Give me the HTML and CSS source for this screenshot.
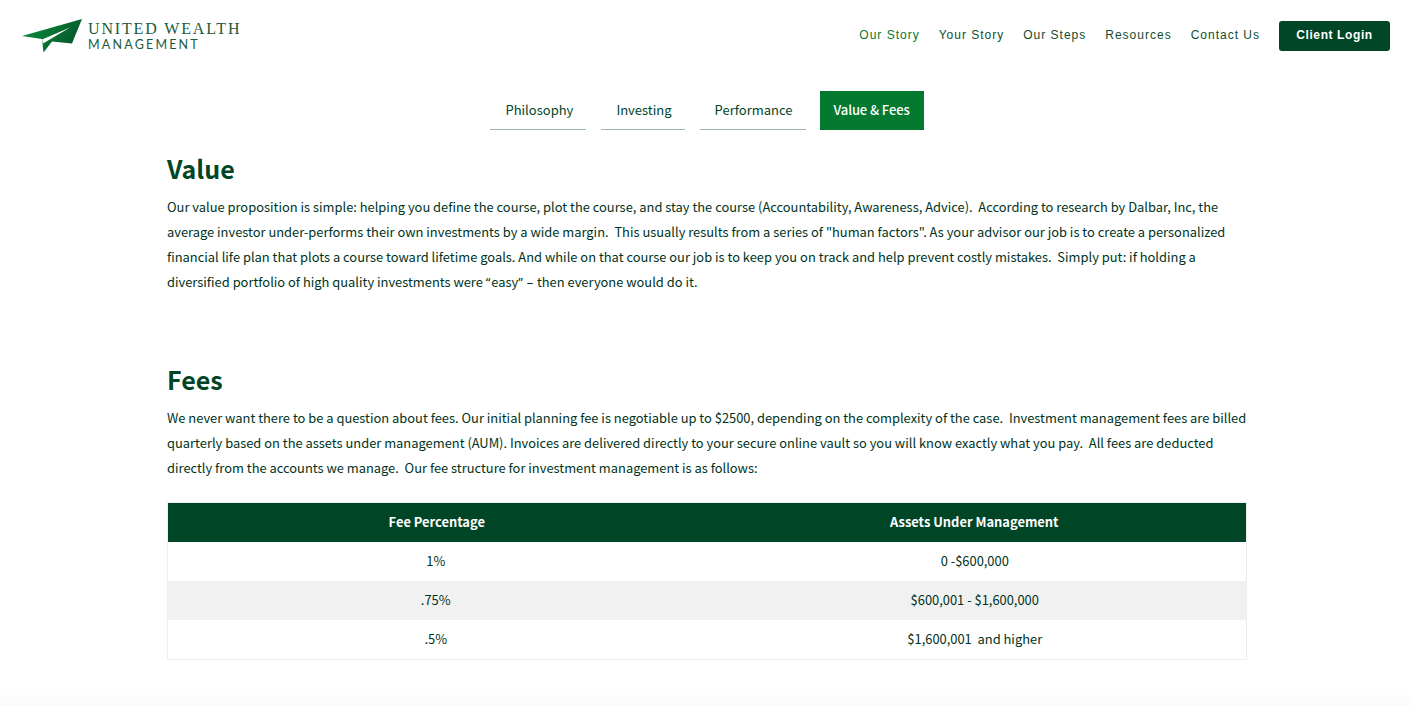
FILE: index.html
```html
<!DOCTYPE html>
<html lang="en">
<head>
<meta charset="utf-8">
<title>Value &amp; Fees</title>
<link rel="stylesheet" href="styles.css">
</head>
<body>
<header class="site-header">
  <a class="logo" href="#">
    <svg class="logo-mark" width="61" height="34" viewBox="0 0 61 34" aria-hidden="true">
      <defs><linearGradient id="g" x1="0" y1="0" x2="1" y2="0.4"><stop offset="0" stop-color="#0c8f3c"/><stop offset="1" stop-color="#045a2c"/></linearGradient></defs>
      <path d="M0 17 L60 0 L50 24.5 L30 22.5 L21.5 33.5 L20 20 Z" fill="url(#g)"/>
      <path d="M48 8.5 L20 20.5 L21 24.5 Z" fill="#fff"/>
    </svg>
    <span class="logo-text"><span class="logo-top">UNITED WEALTH</span><span class="logo-bottom">MANAGEMENT</span></span>
  </a>
  <nav class="main-nav">
    <a class="nav-link active" href="#">Our Story</a>
    <a class="nav-link" href="#">Your Story</a>
    <a class="nav-link" href="#">Our Steps</a>
    <a class="nav-link" href="#">Resources</a>
    <a class="nav-link" href="#">Contact Us</a>
    <a class="login" href="#">Client Login</a>
  </nav>
</header>
<div class="tabs">
  <a class="tab" href="#">Philosophy</a>
  <a class="tab" href="#">Investing</a>
  <a class="tab" href="#">Performance</a>
  <a class="tab current" href="#">Value &amp; Fees</a>
</div>
<main class="content">
  <h2 class="h-value">Value</h2>
  <p>Our value proposition is simple: helping you define the course, plot the course, and stay the course (Accountability, Awareness, Advice).&nbsp; According to research by Dalbar, Inc, the<br>average investor under-performs their own investments by a wide margin.&nbsp; This usually results from a series of "human factors". As your advisor our job is to create a personalized<br>financial life plan that plots a course toward lifetime goals. And while on that course our job is to keep you on track and help prevent costly mistakes.&nbsp; Simply put: if holding a<br>diversified portfolio of high quality investments were <span class="q">“</span>easy<span class="q">”</span> <span class="q">–</span> then everyone would do it.</p>
  <h2 class="h-fees">Fees</h2>
  <p>We never want there to be a question about fees. Our initial planning fee is negotiable up to $2500, depending on the complexity of the case.&nbsp; Investment management fees are billed<br>quarterly based on the assets under management (AUM). Invoices are delivered directly to your secure online vault so you will know exactly what you pay.&nbsp; All fees are deducted<br>directly from the accounts we manage.&nbsp; Our fee structure for investment management is as follows:</p>
  <table class="fees">
    <thead><tr><th class="c1">Fee Percentage</th><th class="c2">Assets Under Management</th></tr></thead>
    <tbody>
      <tr><td>1%</td><td>0 -$600,000</td></tr>
      <tr class="alt"><td>.75%</td><td>$600,001 - $1,600,000</td></tr>
      <tr class="last"><td>.5%</td><td>$1,600,001&nbsp; and higher</td></tr>
    </tbody>
  </table>
</main>
<div class="page-fade"></div>
</body>
</html>
```
FILE: styles.css
```css
* { box-sizing: border-box; }
html, body { margin: 0; height: 706px; overflow: hidden; }
body { background: #fff; color: #00331c; font-family: "Noto Sans CJK SC", "Noto Sans", sans-serif; font-size: 12.9px; position: relative; }
a { text-decoration: none; color: inherit; }
.site-header { display: flex; justify-content: space-between; align-items: flex-start; height: 91px; padding: 19px 22px 0 22px; }
.logo { display: flex; gap: 5px; }
.logo-mark { display: block; }
.logo-text { display: flex; flex-direction: column; padding-top: 1px; color: #1a5a3e; }
.logo-top { font-family: "Liberation Serif", serif; font-size: 16px; line-height: 17px; letter-spacing: 1.85px; }
.logo-bottom { font-family: Lato, sans-serif; font-size: 12.5px; line-height: 15px; letter-spacing: 2.2px; }
.main-nav { display: flex; align-items: center; gap: 19px; margin-top: 1px; height: 32px; font-family: "Liberation Sans", sans-serif; font-size: 12px; letter-spacing: 1px; color: #0f4d30; }
.nav-link { margin-bottom: 3px; }
.nav-link.active { color: #047a30; }
.login { background: #004526; color: #fff; font-weight: 700; width: 111px; height: 30px; line-height: 28px; text-align: center; border-radius: 3px; letter-spacing: .6px; }
.tabs { display: flex; justify-content: center; gap: 15px; height: 39px; padding-left: 2px; font-size: 13px; }
.tab { padding: 0 13px 0 15px; line-height: 38px; color: #004526; border-bottom: 1px solid #9db8aa; }
.tab.current { background: #047a30; color: #fff; border-bottom: 0; font-weight: 500; margin-left: -1px; padding: 0 14px; letter-spacing: -.1px; }
.content { width: 1080px; margin-left: 167px; }
h2 { margin: 0; color: #004526; font-size: 25px; font-weight: 700; line-height: 40px; }
.h-value { padding-top: 18px; height: 63.5px; }
.h-fees { margin-top: 64px; height: 46.5px; }
p { margin: 0; line-height: 25px; color: #00331c; white-space: nowrap; }
.q { font-family: "Noto Sans", sans-serif; letter-spacing: .9px; }
.fees { width: 1080px; margin-top: 22px; border-collapse: collapse; border: 1px solid #eee; table-layout: fixed; }
.fees th { height: 39px; background: #004526; color: #fff; font-weight: 700; padding: 0 0 2px; text-align: center; }
.fees th.c1 { width: 538px; }
.fees th.c2 { padding-right: 3px; }
.fees td { height: 39px; padding: 0 2px 2px 0; text-align: center; }
.fees tr.last td { height: 40px; }
.fees tr.alt td { background: #f1f1f1; }
.page-fade { position: absolute; left: 0; right: 0; bottom: 0; height: 16px; background: linear-gradient(#fff, #fbfbfb); }
```
